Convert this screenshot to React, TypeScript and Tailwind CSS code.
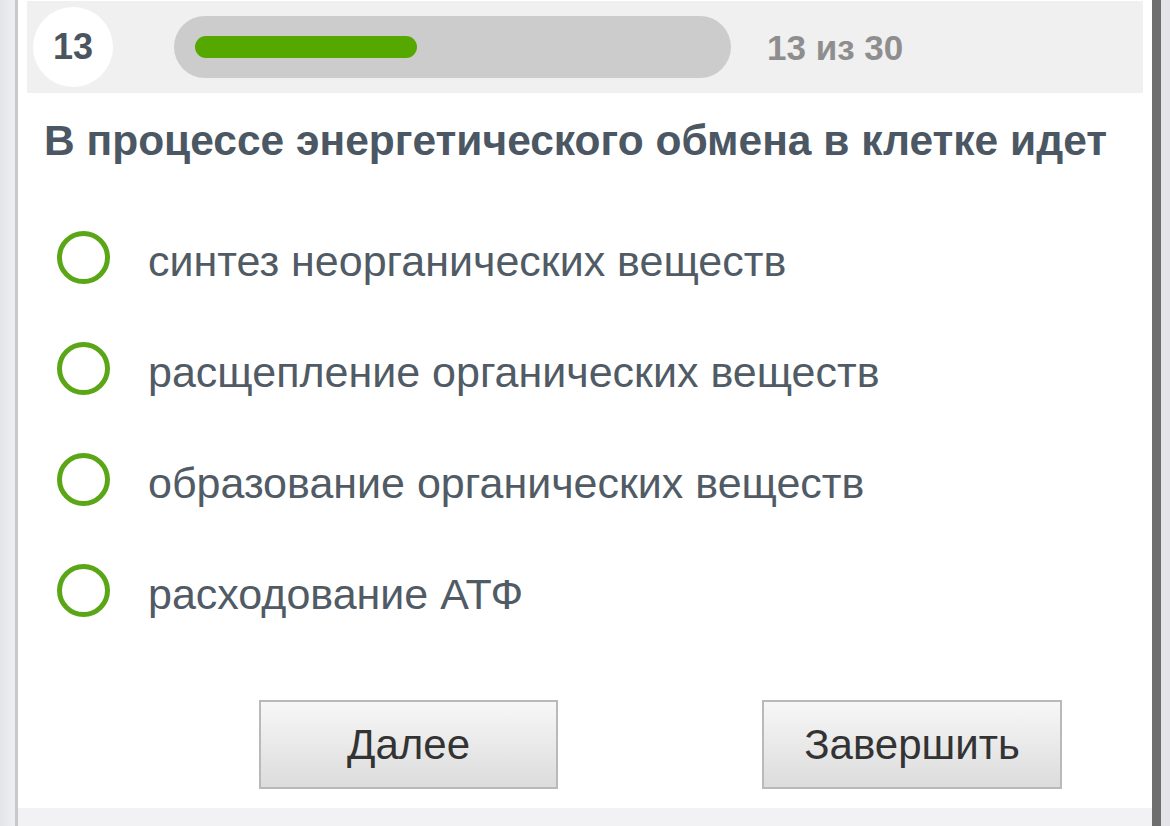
import React, { useState } from 'react';

const answers = [
  'синтез неорганических веществ',
  'расщепление органических веществ',
  'образование органических веществ',
  'расходование АТФ',
];

const current = 13;
const total = 30;

export default function App() {
  const [selected, setSelected] = useState<number | null>(null);

  return (
    <div
      className="flex h-[826px] w-full overflow-hidden bg-[#e8e8ec]"
      style={{ fontFamily: '"Liberation Sans", Arial, sans-serif' }}
    >
      {/* left gutter */}
      <div className="w-[15px] bg-gradient-to-r from-[#e4e5e9] to-[#eeeff2]" />
      <div className="w-[3px] bg-[#c8c8c8]" />

      <div className="flex flex-1 flex-col bg-white">
        {/* progress header */}
        <div className="mx-[9px] mt-px flex h-[92px] items-center bg-[#f0f0f0] px-[6px]">
          <div className="flex h-[80px] w-[80px] items-center justify-center rounded-full bg-white text-[36px] font-bold text-[#4a5560]">
            {current}
          </div>
          <div className="ml-[61px] h-[62px] w-[557px] rounded-full bg-[#cccccc] px-[21px] pt-[20px]">
            <div className="h-[22px] w-[222px] rounded-full bg-[#55a800]" />
          </div>
          <div className="ml-[36px] pt-[3px] text-[35px] font-bold text-[#8e8e8e]">
            {current} из {total}
          </div>
        </div>

        {/* question */}
        <h1 className="ml-[26px] mt-[23px] text-[42.5px] font-bold leading-[50px] text-[#4b5763]">
          В процессе энергетического обмена в клетке идет
        </h1>

        {/* answers */}
        <ul className="mt-[36px]">
          {answers.map((a, i) => (
            <li
              key={i}
              className="flex h-[111px] cursor-pointer items-center"
              onClick={() => setSelected(i)}
            >
              <span className="ml-[39px] flex h-[53px] w-[53px] items-center justify-center rounded-full border-[5px] border-[#5aa617]">
                {selected === i && <span className="h-[23px] w-[23px] rounded-full bg-[#5aa617]" />}
              </span>
              <span className="ml-[38px] pt-[6px] text-[43px] leading-[50px] text-[#505b65]">{a}</span>
            </li>
          ))}
        </ul>

        {/* buttons */}
        <div className="mt-[54px] flex">
          <button className="ml-[241px] h-[89px] w-[299px] border-2 border-[#b9b9b9] bg-gradient-to-b from-[#f7f7f7] to-[#dcdcdc] text-[42px] text-[#333333]">
            Далее
          </button>
          <button className="ml-[204px] h-[89px] w-[300px] border-2 border-[#b9b9b9] bg-gradient-to-b from-[#f7f7f7] to-[#dcdcdc] text-[42px] text-[#333333]">
            Завершить
          </button>
        </div>

        <div className="flex-1" />
        <div className="h-[18px] bg-[#f2f2f4]" />
      </div>

      {/* right edge */}
      <div className="w-[9px] bg-[#6e6e6e]" />
      <div className="w-[9px] bg-[#e4e4e8]" />
    </div>
  );
}
